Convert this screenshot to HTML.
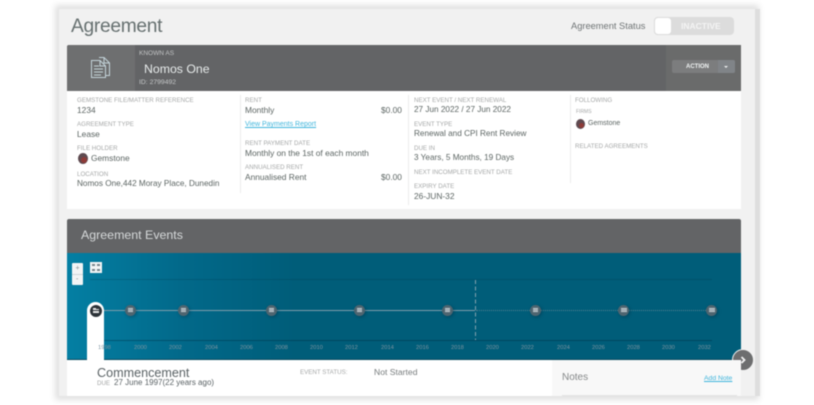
<!DOCTYPE html>
<html>
<head>
<meta charset="utf-8">
<style>
html,body{margin:0;padding:0;background:#fff;}
#root{position:relative;width:814px;height:405px;overflow:hidden;background:#fff;font-family:"Liberation Sans",sans-serif;filter:blur(.5px);}
#root div,#root a,#root svg{position:absolute;}
.t{white-space:nowrap;line-height:1;}
.l{font-size:6.2px;color:#a6a8a8;white-space:nowrap;line-height:1;}
.v{font-size:8.4px;color:#5c6563;white-space:nowrap;line-height:1;}
.y{font-size:5.8px;color:#7b939f;white-space:nowrap;line-height:1;top:346px;}
.sep{width:1px;background:#eceded;}
.n{width:11px;height:11px;border-radius:50%;background:#4f6570;top:304.500px;box-shadow:1px 1px 3px rgba(0,30,50,.35);}
.n::after{content:"";position:absolute;left:3px;top:3.500px;width:5.500px;height:1px;background:#cfd6da;box-shadow:0 1.500px 0 #cfd6da,0 3px 0 #cfd6da;}
</style>
</head>
<body>
<div id="root">
  <!-- page panel -->
  <div style="left:59px;top:9px;width:696px;height:387px;background:#f1f1f1;box-shadow:0 0 6px 4px rgba(0,0,0,.12);"></div>
  <div style="left:755px;top:9px;width:5px;height:387px;background:#dedede;"></div>

  <div class="t" style="left:71px;top:17px;font-size:19.200px;color:#667070;letter-spacing:-.3px;">Agreement</div>
  <div class="t" style="left:571px;top:22px;font-size:9.300px;color:#6f7475;">Agreement Status</div>
  <div style="left:654px;top:17px;width:80px;height:18px;background:#dcdcdc;border-radius:4px;"></div>
  <div style="left:654px;top:17px;width:18px;height:18px;background:#fff;border-radius:4px;border:1px solid #dcdcdc;box-sizing:border-box;"></div>
  <div class="t" style="left:681px;top:22px;font-size:8.500px;font-weight:bold;color:#f4f4f4;">INACTIVE</div>

  <!-- agreement card -->
  <div style="left:67px;top:45px;width:674px;height:164px;background:#fff;"></div>
  <div style="left:67px;top:45px;width:674px;height:46px;background:#636466;border-radius:2px 2px 0 0;"></div>
  <div style="left:67px;top:45px;width:68px;height:46px;background:#6e6f70;border-radius:2px 0 0 0;"></div>
  <div style="left:666px;top:45px;width:75px;height:46px;background:#6a6b6b;"></div>
  <svg style="left:89px;top:55px;" width="24" height="25" viewBox="0 0 24 25" fill="none" stroke="#c4d4da" stroke-width="1">
    <path d="M10 2.500H15L20.500 8V20.500H17"/>
    <path d="M15 2.500V8H20.500"/>
    <path d="M2.500 5.500H11L16.500 11V22.500H2.500Z" fill="#6e6f70"/>
    <path d="M11 5.500V11H16.500"/>
    <path d="M5 11H10M5 14H14M5 17H14M5 20H12"/>
  </svg>
  <div class="l" style="left:139px;top:51px;font-size:6.500px;color:#c2c4c5;">KNOWN AS</div>
  <div class="t" style="left:144px;top:62.500px;font-size:12.300px;color:#e8ecec;">Nomos One</div>
  <div class="t" style="left:139px;top:79.500px;font-size:6.800px;color:#c6c8c9;">ID: 2799492</div>
  <div style="left:672px;top:60px;width:63px;height:13px;background:#7c7d7e;border-radius:2px;"></div>
  <div style="left:718px;top:60px;width:17px;height:13px;background:#808488;border-radius:0 2px 2px 0;"></div>
  <div class="t" style="left:686px;top:63.500px;font-size:6px;font-weight:bold;color:#f1f4f4;">ACTION</div>
  <div style="left:724px;top:65.500px;width:0;height:0;border-left:2.500px solid transparent;border-right:2.500px solid transparent;border-top:2.500px solid #eef0f0;"></div>

  <div class="sep" style="left:240px;top:95px;height:98px;"></div>
  <div class="sep" style="left:408px;top:95px;height:110px;"></div>
  <div class="sep" style="left:570px;top:95px;height:88px;"></div>

  <!-- column 1 -->
  <div class="l" style="left:77px;top:98px;">GEMSTONE FILE/MATTER REFERENCE</div>
  <div class="v" style="left:77px;top:106px;">1234</div>
  <div class="l" style="left:77px;top:122px;">AGREEMENT TYPE</div>
  <div class="v" style="left:77px;top:130px;">Lease</div>
  <div class="l" style="left:77px;top:146px;">FILE HOLDER</div>
  <div style="left:78px;top:153px;width:10px;height:11px;border-radius:50%;background:#5e4a50;"></div>
  <div style="left:81px;top:157px;width:6px;height:6px;border-radius:50%;background:#8e3b38;"></div>
  <div class="v" style="left:91px;top:154px;">Gemstone</div>
  <div class="l" style="left:77px;top:172px;">LOCATION</div>
  <div class="v" style="left:77px;top:180px;font-size:8.200px;">Nomos One,442 Moray Place, Dunedin</div>

  <!-- column 2 -->
  <div class="l" style="left:245px;top:98px;">RENT</div>
  <div class="v" style="left:245px;top:106px;">Monthly</div>
  <div class="v" style="left:381px;top:106px;">$0.00</div>
  <a class="t" style="left:245px;top:121px;font-size:7px;color:#3fb5dc;text-decoration:underline;">View Payments Report</a>
  <div class="l" style="left:245px;top:141px;">RENT PAYMENT DATE</div>
  <div class="v" style="left:245px;top:149px;">Monthly on the 1st of each month</div>
  <div class="l" style="left:245px;top:165px;">ANNUALISED RENT</div>
  <div class="v" style="left:245px;top:173px;">Annualised Rent</div>
  <div class="v" style="left:381px;top:173px;">$0.00</div>

  <!-- column 3 -->
  <div class="l" style="left:414px;top:98px;">NEXT EVENT / NEXT RENEWAL</div>
  <div class="v" style="left:414px;top:106px;font-size:8.200px;">27 Jun 2022 / 27 Jun 2022</div>
  <div class="l" style="left:414px;top:122px;">EVENT TYPE</div>
  <div class="v" style="left:414px;top:130px;font-size:8.200px;">Renewal and CPI Rent Review</div>
  <div class="l" style="left:414px;top:146px;">DUE IN</div>
  <div class="v" style="left:414px;top:154px;font-size:8.200px;">3 Years, 5 Months, 19 Days</div>
  <div class="l" style="left:414px;top:170px;">NEXT INCOMPLETE EVENT DATE</div>
  <div class="l" style="left:414px;top:184px;">EXPIRY DATE</div>
  <div class="v" style="left:414px;top:192px;">26-JUN-32</div>

  <!-- column 4 -->
  <div class="l" style="left:575px;top:98px;">FOLLOWING</div>
  <div class="l" style="left:576px;top:110px;font-size:5px;">FIRMS</div>
  <div style="left:576px;top:119px;width:9px;height:10px;border-radius:50%;background:#5e4a50;"></div>
  <div style="left:579px;top:123px;width:5px;height:5px;border-radius:50%;background:#8e3b38;"></div>
  <div class="t" style="left:588px;top:120px;font-size:7px;color:#5c6563;">Gemstone</div>
  <div class="l" style="left:575px;top:144px;">RELATED AGREEMENTS</div>

  <!-- events card -->
  <div style="left:67px;top:219px;width:674px;height:177px;background:#fff;"></div>
  <div style="left:67px;top:219px;width:674px;height:34px;background:#636466;border-radius:2px 2px 0 0;"></div>
  <div class="t" style="left:81px;top:229px;font-size:12.400px;color:#d6d9da;">Agreement Events</div>
  <div style="left:67px;top:253px;width:674px;height:107px;background:linear-gradient(90deg,#047fa3 0%,#02698a 17%,#005d79 34%,#005d79 100%);"></div>
  <div style="left:67px;top:359px;width:674px;height:1px;background:#0a4a5f;"></div>
  <div style="left:90px;top:279px;width:622px;height:1px;background:rgba(0,50,70,.25);"></div>
  <div style="left:90px;top:340px;width:622px;height:1px;background:rgba(0,40,60,.4);"></div>

  <!-- zoom controls -->
  <div style="left:72px;top:263px;width:11px;height:22px;background:#f2f4f5;border-radius:1px;"></div>
  <div style="left:72px;top:274px;width:11px;height:1px;background:#cfd6d9;"></div>
  <div class="t" style="left:75.500px;top:265px;font-size:7px;color:#7f8b90;">+</div>
  <div class="t" style="left:76px;top:276px;font-size:7px;color:#7f8b90;">-</div>
  <div style="left:90px;top:262px;width:12px;height:11px;background:#f2f4f5;"></div>
  <div style="left:92px;top:264px;width:3px;height:2px;background:#75848b;"></div>
  <div style="left:97px;top:264px;width:3px;height:2px;background:#75848b;"></div>
  <div style="left:92px;top:269px;width:3px;height:2px;background:#75848b;"></div>
  <div style="left:97px;top:269px;width:3px;height:2px;background:#75848b;"></div>

  <!-- timeline -->
  <div style="left:104px;top:309.500px;width:371px;height:1.200px;background:#7f9dab;"></div>
  <div style="left:476px;top:310px;width:236px;border-top:1px dotted #527f90;"></div>
  <div style="left:474.500px;top:280px;width:1.500px;height:60px;background:repeating-linear-gradient(180deg,#84a2ae 0,#84a2ae 4px,transparent 4px,transparent 6.500px);"></div>

  <div style="left:87px;top:302px;width:17px;height:58px;background:#fff;border-radius:9px 9px 0 0;"></div>
  <div style="left:90px;top:305px;width:12px;height:12px;border-radius:50%;background:#2c3338;"></div>
  <div style="left:93px;top:309px;width:6px;height:1px;background:#e8e8e8;"></div>
  <div style="left:93px;top:311px;width:6px;height:2px;background:#e8e8e8;"></div>
  <div style="left:93px;top:307.500px;width:3px;height:1px;background:#e8e8e8;"></div>

  <div class="n" style="left:124.500px;"></div>
  <div class="n" style="left:177.500px;"></div>
  <div class="n" style="left:265.500px;"></div>
  <div class="n" style="left:353.500px;"></div>
  <div class="n" style="left:441.500px;"></div>
  <div class="n" style="left:529.500px;"></div>
  <div class="n" style="left:618px;"></div>
  <div class="n" style="left:706px;"></div>

  <div class="y" style="left:98px;">1998</div>
  <div class="y" style="left:134px;">2000</div>
  <div class="y" style="left:169px;">2002</div>
  <div class="y" style="left:205px;">2004</div>
  <div class="y" style="left:240px;">2006</div>
  <div class="y" style="left:275px;">2008</div>
  <div class="y" style="left:310px;">2010</div>
  <div class="y" style="left:345px;">2012</div>
  <div class="y" style="left:381px;">2014</div>
  <div class="y" style="left:416px;">2016</div>
  <div class="y" style="left:451px;">2018</div>
  <div class="y" style="left:486px;">2020</div>
  <div class="y" style="left:521px;">2022</div>
  <div class="y" style="left:557px;">2024</div>
  <div class="y" style="left:592px;">2026</div>
  <div class="y" style="left:627px;">2028</div>
  <div class="y" style="left:662px;">2030</div>
  <div class="y" style="left:698px;">2032</div>

  <!-- next arrow -->
  <div style="left:732px;top:349px;width:22px;height:22px;border-radius:50%;background:#6d6e6f;border:1px solid #f1f1f1;box-sizing:border-box;"></div>
  <svg style="left:739px;top:356px;" width="8" height="8" viewBox="0 0 8 8" fill="none" stroke="#f2f2f2" stroke-width="1.800"><path d="M2.500 1L5.500 4L2.500 7"/></svg>

  <!-- event details -->
  <div class="t" style="left:97px;top:367px;font-size:12.600px;color:#5a6265;">Commencement</div>
  <div class="t" style="left:97px;top:381px;font-size:6.200px;color:#a3a5a5;">DUE</div>
  <div class="t" style="left:114px;top:379px;font-size:8px;color:#5a6265;">27 June 1997(22 years ago)</div>
  <div class="l" style="left:300px;top:369.500px;">EVENT STATUS:</div>
  <div class="t" style="left:374px;top:368px;font-size:8.600px;color:#777c7d;">Not Started</div>

  <!-- notes -->
  <div style="left:552px;top:360px;width:189px;height:36px;background:#f8f8f8;"></div>
  <div class="t" style="left:562px;top:373px;font-size:10px;color:#858889;">Notes</div>
  <a class="t" style="left:704px;top:376px;font-size:6.800px;color:#3fb5dc;text-decoration:underline;">Add Note</a>
  <div style="left:562px;top:395px;width:175px;height:1px;background:#e3e3e3;"></div>
</div>
</body>
</html>
